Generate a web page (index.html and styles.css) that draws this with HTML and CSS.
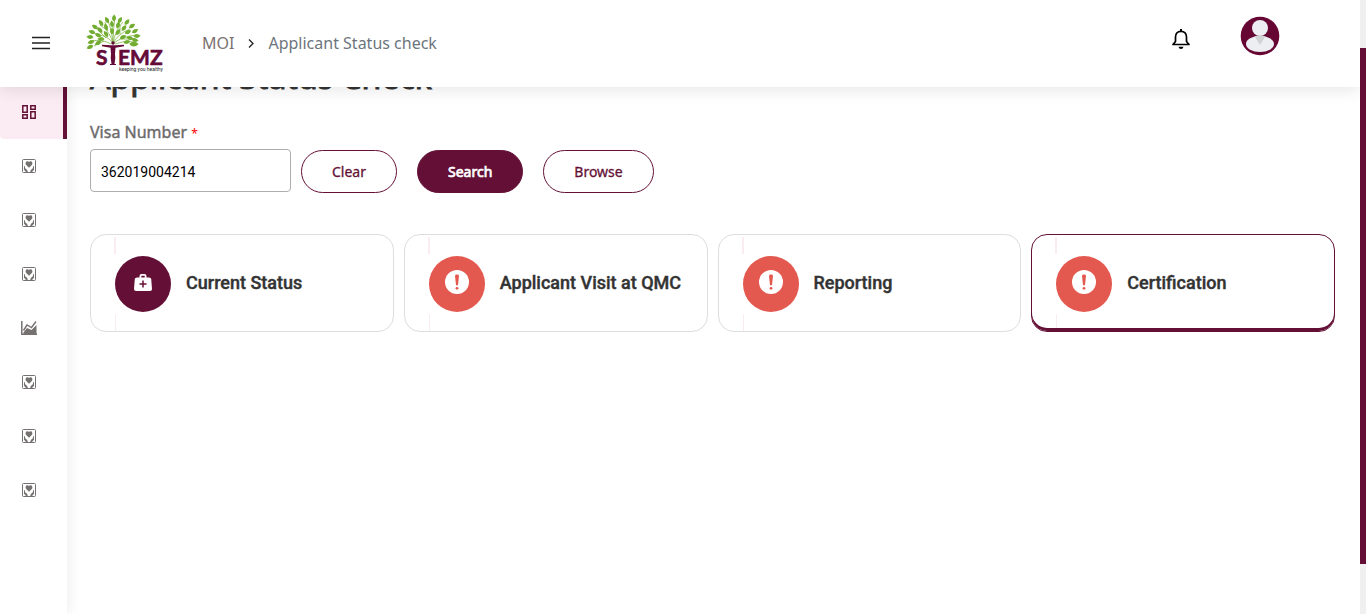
FILE: index.html
```html
<!DOCTYPE html>
<html lang="en">
<head>
<meta charset="utf-8">
<title>Applicant Status Check</title>
<link rel="stylesheet" href="styles.css">
</head>
<body>
<svg class="defs" aria-hidden="true">
  <defs><path id="leaf" d="M-3.600 0Q-.4-3.900 3.600 0Q-.4 3.900-3.600 0Z"/></defs>
  <symbol id="care" viewBox="0 0 14 14">
    <rect x=".5" y=".5" width="13" height="13" rx="1" fill="none" stroke="currentColor"/>
    <path fill="currentColor" d="M7 8.800 4.200 6C2.900 4.300 3.900 2.200 5.500 2.200 6.200 2.200 6.700 2.500 7 2.900 7.300 2.500 7.800 2.200 8.500 2.200c1.600 0 2.600 2.100 1.300 3.800ZM2 7l.8.3.4 2L5.200 11l.6 2H4L2 10.700ZM12 7l-.8.3-.4 2L8.800 11l-.6 2H10l2-2.300Z"/>
  </symbol>
  <symbol id="alert" viewBox="0 0 24 24">
    <circle cx="12" cy="12" r="12" fill="#fff"/>
    <path fill="#e4594f" d="M10 5.800Q10 4.600 12 4.600T14 5.800L13 15.200H11Z"/><circle cx="12" cy="18.300" r="1.400" fill="#e4594f"/>
  </symbol>
</svg>
<div class="shell">
  <div class="app">
    <header class="topbar">
      <button class="icon-button" aria-label="Toggle menu">
        <svg width="18" height="14" viewBox="0 0 18 14"><path d="M0 1.500H18M0 7H18M0 12.500H18" stroke="#222" stroke-width="1.500"/></svg>
      </button>
      <a class="logo" href="#" aria-label="Stemz home">
        <svg width="84" height="64" viewBox="0 0 84 64">
          <g fill="none" stroke="#72ad32" stroke-width=".7">
            <path d="M29 32Q27 25 12 22M29 32Q27 20 16 13M29 32Q28 18 24 9M29 32Q29 18 31 5M29 32Q31 18 39 10M29 32Q33 22 46 17M29 32Q36 25 52 23M27 32Q19 27 6 29M31 32Q40 28 50 30M22 26 13 17M36 22 36 13M24 19 21 10M37 27 48 27M20 29 10 34"/>
          </g>
          <g fill="#72ad32">
            <use href="#leaf" transform="translate(30 6) rotate(-85)"/>
            <use href="#leaf" transform="translate(23 8) rotate(-115)"/>
            <use href="#leaf" transform="translate(36 8) rotate(-60)"/>
            <use href="#leaf" transform="translate(17 11) rotate(-125)"/>
            <use href="#leaf" transform="translate(43 10) rotate(-50)"/>
            <use href="#leaf" transform="translate(28 12) rotate(-100)"/>
            <use href="#leaf" transform="translate(34 13) rotate(-70)"/>
            <use href="#leaf" transform="translate(22 15) rotate(-110)"/>
            <use href="#leaf" transform="translate(11 15) rotate(-145)"/>
            <use href="#leaf" transform="translate(48 14) rotate(-35)"/>
            <use href="#leaf" transform="translate(16 18) rotate(-130)"/>
            <use href="#leaf" transform="translate(40 16) rotate(-50)"/>
            <use href="#leaf" transform="translate(28 19) rotate(-90)"/>
            <use href="#leaf" transform="translate(34 20) rotate(-60)"/>
            <use href="#leaf" transform="translate(8 20) rotate(-160)"/>
            <use href="#leaf" transform="translate(51 19) rotate(-30)"/>
            <use href="#leaf" transform="translate(14 23) rotate(-155)"/>
            <use href="#leaf" transform="translate(22 22) rotate(-125)"/>
            <use href="#leaf" transform="translate(44 20) rotate(-25)"/>
            <use href="#leaf" transform="translate(39 25) rotate(-25)"/>
            <use href="#leaf" transform="translate(6 25) rotate(-175)"/>
            <use href="#leaf" transform="translate(53 24) rotate(-5)"/>
            <use href="#leaf" transform="translate(46 26) rotate(10)"/>
            <use href="#leaf" transform="translate(17 27) rotate(180)"/>
            <use href="#leaf" transform="translate(51 28) rotate(10)"/>
            <use href="#leaf" transform="translate(7 30) rotate(160)"/>
            <use href="#leaf" transform="translate(14 31) rotate(150)"/>
            <use href="#leaf" transform="translate(6 35) rotate(155)"/>
            <use href="#leaf" transform="translate(50 32) scale(1.300)"/>
            <use href="#leaf" transform="translate(43 30) rotate(-10)"/>
          </g>
          <g fill="#650b38">
            <circle cx="29" cy="31" r="1.700"/>
            <path d="M18 32.800 27 33.200H31L40 32.800V34.200L31.500 35.700 31 42 31.300 46 30.500 52H32V53H26V52H27.500L26.700 46 27 42 26.500 35.700 18 34.200Z"/>
            <text class="logo-name" x="12" y="53">S</text>
            <text class="logo-name" x="34" y="53">EMZ</text>
          </g>
          <text class="logo-tag" x="35" y="59">keeping you healthy</text>
        </svg>
      </a>
      <nav class="breadcrumb" aria-label="Breadcrumb">
        <a href="#">MOI</a>
        <svg width="6" height="9" viewBox="0 0 6 9"><path d="M1 .5 5 4.500 1 8.500" fill="none" stroke="#222" stroke-width="1.300"/></svg>
        <span class="crumb-current">Applicant Status check</span>
      </nav>
      <button class="icon-button bell" aria-label="Notifications">
        <svg width="18" height="20" viewBox="0 0 18 20"><path d="M1 15.500H17L14.500 12.500V8C14.500 4.500 12.500 2.300 9 2.300S3.500 4.500 3.500 8V12.500Z" fill="none" stroke="#000" stroke-width="1.700" stroke-linejoin="round"/><path d="M9 0V2.500" stroke="#000" stroke-width="2"/><path d="M6.500 17.700H11.500Q11 20 9 20T6.500 17.700Z"/></svg>
      </button>
      <button class="icon-button avatar" aria-label="Account">
        <svg width="40" height="40" viewBox="0 0 40 40"><circle cx="20" cy="20" r="19.300" fill="#650633"/><ellipse cx="20" cy="28" rx="14" ry="8" fill="#eceef1"/><circle cx="20" cy="12" r="8" fill="#eceef1"/><path d="M14.500 20.300Q20 18.500 25.500 20.300L20 29Z" fill="#d0d2d3"/></svg>
      </button>
    </header>
    <div class="body">
      <nav class="sidebar" aria-label="Main">
        <a class="side-item active" href="#" aria-label="Dashboard"><svg width="14" height="14" viewBox="0 0 14 14" fill="none" stroke="currentColor" stroke-width="1.500"><path d="M.8.800H5.200V7.200H.8ZM8.800.800H13.200V4.200H8.800ZM.8 9.800H5.200V13.200H.8ZM8.800 6.800H13.200V13.200H8.800Z"/></svg></a>
        <a class="side-item" href="#" aria-label="Care"><svg width="14" height="14"><use href="#care"/></svg></a>
        <a class="side-item" href="#" aria-label="Applicants"><svg width="14" height="14"><use href="#care"/></svg></a>
        <a class="side-item" href="#" aria-label="Visits"><svg width="14" height="14"><use href="#care"/></svg></a>
        <a class="side-item" href="#" aria-label="Reports"><svg width="16" height="14" viewBox="0 0 16 14"><path d="M.8 0V13.300H16" fill="none" stroke="currentColor" stroke-width="1.500"/><path d="M2.500 13V11.500L6 7 10.500 9 15.500 4V13Z" fill="currentColor"/><path d="M2.500 9.500 6 4 10.500 6.500 15 .5" fill="none" stroke="currentColor" stroke-width="1.400"/></svg></a>
        <a class="side-item" href="#" aria-label="Certificates"><svg width="14" height="14"><use href="#care"/></svg></a>
        <a class="side-item" href="#" aria-label="Services"><svg width="14" height="14"><use href="#care"/></svg></a>
        <a class="side-item" href="#" aria-label="Settings"><svg width="14" height="14"><use href="#care"/></svg></a>
      </nav>
      <main class="main">
        <h1>Applicant Status Check</h1>
        <form class="search">
          <div class="field">
            <label for="visa">Visa Number <span class="required">*</span></label>
            <input id="visa" type="text" value="362019004214">
          </div>
          <div class="actions">
            <button class="btn" type="button">Clear</button>
            <button class="btn primary" type="button">Search</button>
            <button class="btn" type="button">Browse</button>
          </div>
        </form>
        <section class="cards">
          <button class="card"><span class="rail"><span class="badge done"><svg width="18" height="17" viewBox="0 0 18 17"><path d="M5.500 3.500V2Q5.500 0 7.500 0H10.500Q12.500 0 12.500 2V3.500H15Q17 3.500 17.200 5L18 15Q18 17 16 17H2Q0 17 0 15L.8 5Q1 3.500 3 3.500ZM7.300 3.500H10.700V1.700H7.300Z" fill="#fff" fill-rule="evenodd"/><path d="M9 6.500V13.500M5.500 10H12.500" stroke="#641036" stroke-width="1.500"/></svg></span></span><span class="card-title">Current Status</span></button>
          <button class="card"><span class="rail"><span class="badge"><svg width="24" height="24"><use href="#alert"/></svg></span></span><span class="card-title">Applicant Visit at QMC</span></button>
          <button class="card"><span class="rail"><span class="badge"><svg width="24" height="24"><use href="#alert"/></svg></span></span><span class="card-title">Reporting</span></button>
          <button class="card selected"><span class="rail"><span class="badge"><svg width="24" height="24"><use href="#alert"/></svg></span></span><span class="card-title">Certification</span></button>
        </section>
      </main>
    </div>
  </div>
  <div class="scroll-track" aria-hidden="true"><div class="scroll-thumb"></div></div>
</div>
</body>
</html>
```
FILE: styles.css
```css
:root {
  --brand: #641036;
  --alert: #e4594f;
  --blush: #fbebf2;
  --ink: #333;
}
* { box-sizing: border-box; }
body {
  margin: 0;
  background: #fff;
  color: var(--ink);
  font-family: "Noto Sans", sans-serif;
}
button, input { font: inherit; }
svg { display: block; }
.defs { position: absolute; width: 0; height: 0; }

.shell { display: flex; min-height: 100vh; }
.app { flex: 1; display: flex; flex-direction: column; min-width: 0; overflow: hidden; }
.scroll-track { width: 6px; padding-top: 48px; background: #f0f0f0; }
.scroll-thumb { height: 84vh; background: var(--brand); }

.topbar {
  position: relative;
  z-index: 1;
  display: flex;
  align-items: flex-start;
  height: 87px;
  padding: 0 80px 0 32px;
  background: #fff;
  box-shadow: 0 2px 16px rgba(0, 0, 0, .11);
}
.icon-button { padding: 0; border: 0; background: none; margin-top: 36px; }
.logo { margin: 12px 0 0 34px; }
.logo-name { font: 700 21px Lato, sans-serif; stroke: #650b38; stroke-width: .6px; }
.logo-tag { font: 5px Roboto, sans-serif; fill: #222; }
.breadcrumb {
  display: flex;
  align-items: center;
  gap: 14px;
  margin: 32px auto 0 34px;
  font-size: 16px;
  line-height: 22px;
}
.breadcrumb a { color: #7a7170; text-decoration: none; }
.crumb-current { color: #6c757d; }
.bell { margin: 29px 50px 0 0; }
.avatar { margin-top: 16px; }

.body { flex: 1; display: flex; }
.sidebar { width: 67px; flex: none; margin-top: -2px; box-shadow: 0 0 14px rgba(0, 0, 0, .09); }
.side-item {
  display: flex;
  align-items: center;
  justify-content: center;
  height: 54px;
  padding-right: 9px;
  color: #767171;
}
.side-item.active {
  padding-right: 5px;
  border-right: 4px solid var(--brand);
  border-radius: 4px 0 0 4px;
  background: var(--blush);
  color: var(--brand);
}

.main { flex: 1; min-width: 0; padding: 0 25px 24px 23px; }
h1 {
  margin: -30px 0 24px;
  font-size: 32px;
  line-height: 40px;
  font-weight: 400;
  -webkit-text-stroke: 1px currentColor;
}
.search { display: flex; align-items: flex-end; gap: 10px; }
.field { display: flex; flex-direction: column; gap: 4px; padding-bottom: 1px; }
.field label {
  color: #6b6b6b;
  font-size: 16px;
  line-height: 22px;
  -webkit-text-stroke: .4px currentColor;
}
.required { color: #f00; font-size: 12px; -webkit-text-stroke: 0; }
.field input {
  width: 201px;
  height: 43px;
  padding: 3px 10px 0;
  border: 1px solid #adadad;
  border-radius: 4px;
  color: #000;
  font-family: Roboto, sans-serif;
  font-size: 14px;
}
.actions { display: flex; gap: 20px; }
.btn {
  height: 43px;
  padding: 0 30px;
  border: 1px solid var(--brand);
  border-radius: 22px;
  background: #fff;
  color: var(--brand);
  font-size: 14px;
  -webkit-text-stroke: .3px currentColor;
}
.btn.primary { background: var(--brand); color: #fff; -webkit-text-stroke-width: .7px; }

.cards {
  display: grid;
  grid-template-columns: repeat(4, 1fr);
  gap: 10px;
  margin-top: 41px;
}
.card {
  display: flex;
  align-items: stretch;
  gap: 15px;
  height: 98px;
  padding: 0 24px;
  border: 1px solid #ddd;
  border-radius: 16px;
  background: #fff;
  color: var(--ink);
  text-align: left;
}
.card.selected { border-color: var(--brand); box-shadow: inset 0 -3px var(--brand); }
.rail { display: flex; flex-direction: column; align-items: flex-start; gap: 2px; padding-top: 2px; }
.rail::before { content: ""; width: 2px; height: 17px; margin-left: -1px; background: var(--blush); }
.rail::after { content: ""; width: 1px; flex: 1; background: var(--blush); }
.selected .rail { padding-bottom: 3px; }
.badge {
  display: flex;
  align-items: center;
  justify-content: center;
  width: 56px;
  height: 56px;
  padding-bottom: 4px;
  border-radius: 50%;
  background: var(--alert);
}
.badge.done { background: var(--brand); }
.card-title {
  align-self: center;
  font-family: Roboto, sans-serif;
  font-size: 18px;
  line-height: 24px;
  font-weight: 500;
  -webkit-text-stroke: .4px currentColor;
}
```
